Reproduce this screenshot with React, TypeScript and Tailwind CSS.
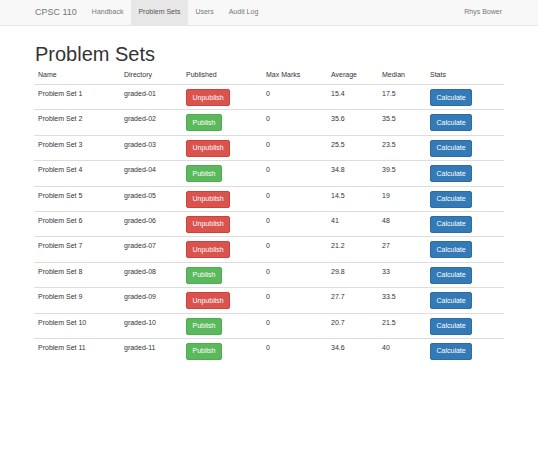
import React from 'react';

type ProblemSet = {
  name: string;
  directory: string;
  published: boolean;
  maxMarks: number;
  average: string;
  median: string;
};

const problemSets: ProblemSet[] = [
  { name: 'Problem Set 1', directory: 'graded-01', published: true, maxMarks: 0, average: '15.4', median: '17.5' },
  { name: 'Problem Set 2', directory: 'graded-02', published: false, maxMarks: 0, average: '35.6', median: '35.5' },
  { name: 'Problem Set 3', directory: 'graded-03', published: true, maxMarks: 0, average: '25.5', median: '23.5' },
  { name: 'Problem Set 4', directory: 'graded-04', published: false, maxMarks: 0, average: '34.8', median: '39.5' },
  { name: 'Problem Set 5', directory: 'graded-05', published: true, maxMarks: 0, average: '14.5', median: '19' },
  { name: 'Problem Set 6', directory: 'graded-06', published: true, maxMarks: 0, average: '41', median: '48' },
  { name: 'Problem Set 7', directory: 'graded-07', published: true, maxMarks: 0, average: '21.2', median: '27' },
  { name: 'Problem Set 8', directory: 'graded-08', published: false, maxMarks: 0, average: '29.8', median: '33' },
  { name: 'Problem Set 9', directory: 'graded-09', published: true, maxMarks: 0, average: '27.7', median: '33.5' },
  { name: 'Problem Set 10', directory: 'graded-10', published: false, maxMarks: 0, average: '20.7', median: '21.5' },
  { name: 'Problem Set 11', directory: 'graded-11', published: false, maxMarks: 0, average: '34.6', median: '40' },
];

const navLinks = ['Handback', 'Problem Sets', 'Users', 'Audit Log'];

const cell = 'px-[4px] pt-[4px] pb-[3.4px] align-top';

const App = () => {
  return (
    <div className="min-h-screen bg-white text-[#333] font-['Liberation_Sans',Arial,sans-serif]">
      <nav className="h-[26px] border-b border-[#e7e7e7] bg-[#f8f8f8]">
        <div className="mx-auto flex h-full w-[470px] items-stretch justify-between">
          <div className="flex items-stretch">
            <a className="flex items-center pl-[1px] pr-[7.5px] text-[9px] text-[#777]">CPSC 110</a>
            {navLinks.map((link) => (
              <a
                key={link}
                className={`flex items-center px-[7.5px] text-[7px] ${
                  link === 'Problem Sets' ? 'bg-[#e7e7e7] text-[#555]' : 'text-[#777]'
                }`}
              >
                {link}
              </a>
            ))}
          </div>
          <a className="flex items-center pr-[2px] text-[7px] text-[#777]">Rhys Bower</a>
        </div>
      </nav>

      <div className="mx-auto w-[470px]">
        <h1 className="mt-[17px] mb-[1px] pl-[1px] text-[20px] font-medium leading-[22px]">Problem Sets</h1>

        <table className="w-full border-collapse text-left text-[7px] leading-[10px]">
          <thead>
            <tr className="border-b border-[#ddd]">
              <th className="w-[86px] px-[4px] pt-[4px] pb-[4px] font-normal">Name</th>
              <th className="w-[62px] px-[4px] pt-[4px] pb-[4px] font-normal">Directory</th>
              <th className="w-[80px] px-[4px] pt-[4px] pb-[4px] font-normal">Published</th>
              <th className="w-[65px] px-[4px] pt-[4px] pb-[4px] font-normal">Max Marks</th>
              <th className="w-[51px] px-[4px] pt-[4px] pb-[4px] font-normal">Average</th>
              <th className="w-[48px] px-[4px] pt-[4px] pb-[4px] font-normal">Median</th>
              <th className="px-[4px] pt-[4px] pb-[4px] font-normal">Stats</th>
            </tr>
          </thead>
          <tbody>
            {problemSets.map((ps, i) => (
              <tr key={ps.name} className={i === 0 ? '' : 'border-t border-[#ddd]'}>
                <td className={cell}>{ps.name}</td>
                <td className={cell}>{ps.directory}</td>
                <td className={cell}>
                  {ps.published ? (
                    <button className="h-[17px] rounded-[2px] border border-[#d43f3a] bg-[#d9534f] px-[5.5px] text-[7px] leading-[10px] text-white">
                      Unpublish
                    </button>
                  ) : (
                    <button className="h-[17px] rounded-[2px] border border-[#4cae4c] bg-[#5cb85c] px-[5.5px] text-[7px] leading-[10px] text-white">
                      Publish
                    </button>
                  )}
                </td>
                <td className={cell}>{ps.maxMarks}</td>
                <td className={cell}>{ps.average}</td>
                <td className={cell}>{ps.median}</td>
                <td className={cell}>
                  <button className="h-[17px] rounded-[2px] border border-[#2e6da4] bg-[#337ab7] px-[5.5px] text-[7px] leading-[10px] text-white">
                    Calculate
                  </button>
                </td>
              </tr>
            ))}
          </tbody>
        </table>
      </div>
    </div>
  );
};

export default App;
